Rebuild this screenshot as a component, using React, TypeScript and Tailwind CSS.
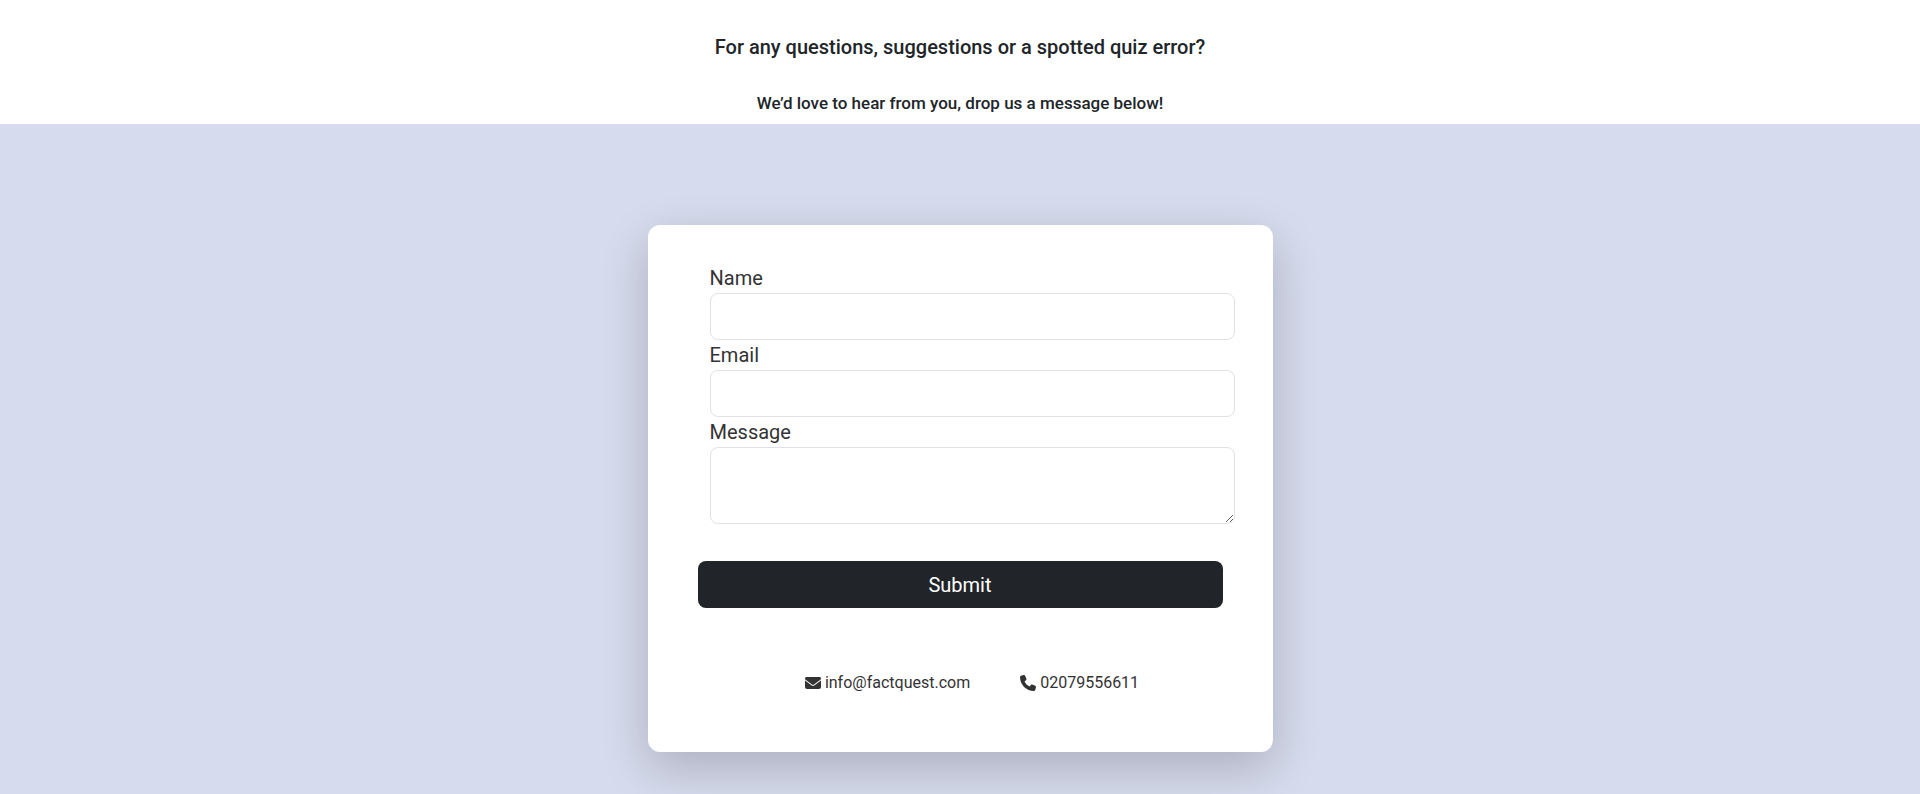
import { FaEnvelope, FaPhone } from "react-icons/fa6";

const fieldClass =
  "block w-full rounded-lg border border-[#dee2e6] bg-white px-3 text-xl text-[#212529] outline-none focus:border-[#86b7fe]";

export default function App() {
  return (
    <div className="flex min-h-screen flex-col bg-[#d6dbed] font-['Roboto',sans-serif] text-[#333]">
      <header className="bg-white pt-8 pb-2 text-center font-medium text-[#212529]">
        <h1 className="text-xl leading-[30px]">For any questions, suggestions or a spotted quiz error?</h1>
        <h2 className="mt-7 text-[17px] leading-[26px]">We’d love to hear from you, drop us a message below!</h2>
      </header>
      <main className="flex justify-center pt-[101px] pb-10">
        <section className="w-full max-w-[625px] rounded-xl bg-white px-[50px] pt-[38px] pb-[55px] shadow-[0_16px_48px_rgba(0,0,0,0.2)]">
          <form onSubmit={(e) => e.preventDefault()}>
            <div className="ml-3 -mr-3 text-xl leading-[30px]">
              <label htmlFor="name" className="block">Name</label>
              <input id="name" type="text" className={`${fieldClass} h-[47px]`} />
              <label htmlFor="email" className="block">Email</label>
              <input id="email" type="email" className={`${fieldClass} h-[47px]`} />
              <label htmlFor="message" className="block">Message</label>
              <textarea id="message" className={`${fieldClass} h-[77px] resize-y py-2`} />
            </div>
            <button type="submit" className="mt-[37px] block h-[47px] w-full rounded-lg bg-[#212529] text-xl text-white">
              Submit
            </button>
          </form>
          <div className="mt-[61px] ml-6 flex justify-center gap-[50px] text-base leading-7">
            <a href="mailto:info@factquest.com" className="flex items-center gap-1">
              <FaEnvelope aria-hidden="true" />
              info@factquest.com
            </a>
            <a href="tel:02079556611" className="flex items-center gap-1">
              <FaPhone aria-hidden="true" />
              02079556611
            </a>
          </div>
        </section>
      </main>
    </div>
  );
}
